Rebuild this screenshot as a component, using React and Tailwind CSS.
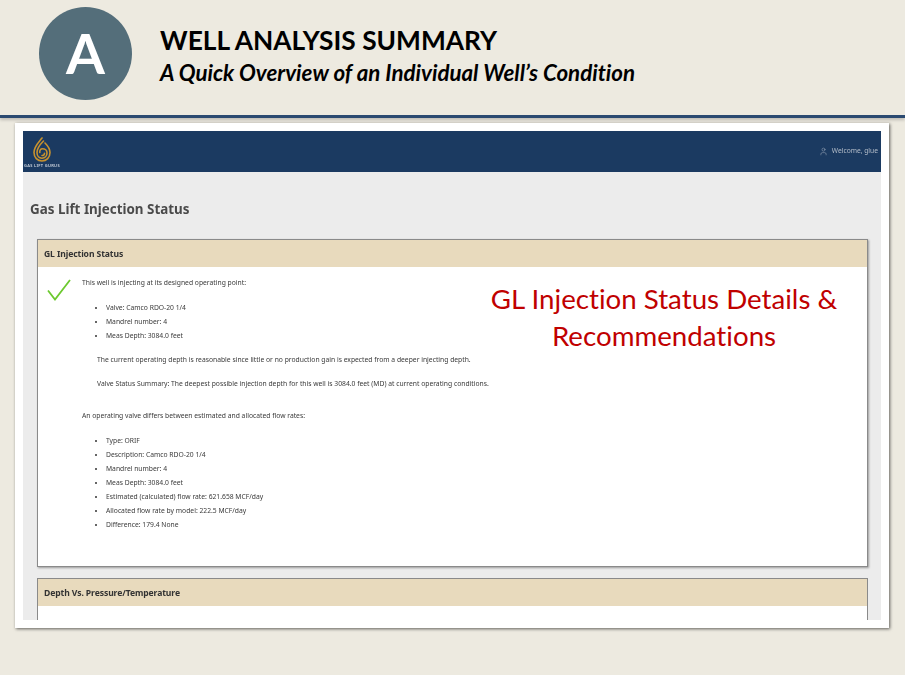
import { User } from 'lucide-react'

const VALVE = ['Valve: Camco RDO-20 1/4', 'Mandrel number: 4', 'Meas Depth: 3084.0 feet']
const FLOW = [
  'Type: ORIF',
  'Description: Camco RDO-20 1/4',
  'Mandrel number: 4',
  'Meas Depth: 3084.0 feet',
  'Estimated (calculated) flow rate: 621.658 MCF/day',
  'Allocated flow rate by model: 222.5 MCF/day',
  'Difference: 179.4 None',
]

function Bullets({ items }) {
  return (
    <ul className="list-disc pl-[24px] marker:text-[#333]">
      {items.map(item => <li key={item} className="h-[14px] leading-[14px]">{item}</li>)}
    </ul>
  )
}

function Logo() {
  return (
    <svg width="20" height="26" viewBox="0 0 20 26" fill="none" stroke="#c8922e" strokeWidth="1.6" strokeLinecap="round">
      <path d="M10 1C7 5 2 9 2 15.500C2 20.500 5.500 24 10 24C14.500 24 18 20.500 18 15.500C18 11.500 15.500 8.500 13 6" />
      <path d="M11.500 4C8 7.500 5 11 5 15.500C5 19 7.200 21.200 10 21.200C12.800 21.200 15 19 15 16C15 13.500 13 11.800 10.500 11.800C8.500 11.800 7.500 13.500 7.800 15.500" />
      <path d="M10 18.500C11.500 18.500 12.500 17.500 12.500 16.200" />
    </svg>
  )
}

export default function App() {
  return (
    <div className="relative w-[905px] h-[675px] overflow-hidden bg-[#edeae0] font-['Lato',sans-serif] [font-variant-ligatures:none]">
      {/* Slide header */}
      <div className="flex items-center h-[118px] pl-[39px] pb-[9px] border-b-[3px] border-[#2b4a70] shadow-[0_2px_3px_rgba(0,0,0,0.2)]">
        <div className="flex items-center justify-center w-[93px] h-[93px] rounded-full bg-[#546e7a] text-white text-[56px] font-bold leading-none">A</div>
        <div className="ml-[28px] mt-[4px] text-black">
          <div className="text-[26.300px] leading-[36px] font-bold">WELL ANALYSIS SUMMARY</div>
          <div className="text-[22.300px] leading-[30px] font-bold italic">A Quick Overview of an Individual Well’s Condition</div>
        </div>
      </div>

      {/* Embedded screenshot */}
      <div className="relative mt-[5px] ml-[15px] w-[874px] h-[505px] bg-white p-[8px] shadow-[1px_1px_3px_rgba(0,0,0,0.6)]">
        <div className="h-[489px] overflow-hidden bg-[#ececec] font-['Noto_Sans',sans-serif] blur-[0.5px]">
          <div className="flex items-center justify-between h-[41px] bg-[#1b3a61] pr-[3px]">
            <div className="flex flex-col items-center w-[38px] pt-[2px]">
              <Logo />
              <span className="text-[4px] leading-[6px] tracking-[0.3px] font-semibold text-[#cfd6df] whitespace-nowrap">GAS LIFT GURUS</span>
            </div>
            <div className="flex items-center gap-[4px] text-[6.700px] text-[#b4bdc9]">
              <User size={9} strokeWidth={1.2} />
              <span>Welcome, glue</span>
            </div>
          </div>

          <h1 className="mt-[27px] ml-[7px] text-[13.400px] leading-[20px] font-bold text-[#4a4a4a]">Gas Lift Injection Status</h1>

          <div className="mt-[20px] ml-[14px] mr-[13px] border border-[#8a8a8a] bg-white shadow-[1px_1px_2px_rgba(0,0,0,0.35)]">
            <div className="h-[27px] px-[6px] bg-[#e8dabd] text-[8.600px] tracking-[-0.1px] leading-[28px] font-bold text-[#333]">GL Injection Status</div>
            <div className="flex h-[299px] pl-[9px] pt-[9px] text-[6.750px] text-[#3a3a3a]">
              <svg className="mt-[3px] shrink-0" width="24" height="22" viewBox="0 0 24 22" fill="none" stroke="#6cc92f" strokeWidth="1.800">
                <path d="M1 11.500L8 20.500L23 1" />
              </svg>
              <div className="ml-[11px]">
                <p className="leading-[14px]">This well is injecting at its designed operating point:</p>
                <div className="mt-[11px]"><Bullets items={VALVE} /></div>
                <p className="mt-[10px] ml-[15px] leading-[14px]">The current operating depth is reasonable since little or no production gain is expected from a deeper injecting depth.</p>
                <p className="mt-[10px] ml-[15px] leading-[14px]">Valve Status Summary: The deepest possible injection depth for this well is 3084.0 feet (MD) at current operating conditions.</p>
                <p className="mt-[18px] leading-[14px]">An operating valve differs between estimated and allocated flow rates:</p>
                <div className="mt-[11px]"><Bullets items={FLOW} /></div>
              </div>
            </div>
          </div>

          <div className="mt-[11px] ml-[14px] mr-[13px] border border-[#8a8a8a] bg-white">
            <div className="h-[27px] px-[6px] bg-[#e8dabd] text-[8.600px] tracking-[-0.1px] leading-[28px] font-bold text-[#333]">Depth Vs. Pressure/Temperature</div>
            <div className="h-[40px]" />
          </div>
        </div>

        {/* Callout over the screenshot */}
        <div className="absolute left-[449px] top-[157px] w-[400px] text-center text-[27.700px] leading-[37px] text-[#c00000] font-['Lato',sans-serif]">
          GL Injection Status Details &amp; Recommendations
        </div>
      </div>
    </div>
  )
}
